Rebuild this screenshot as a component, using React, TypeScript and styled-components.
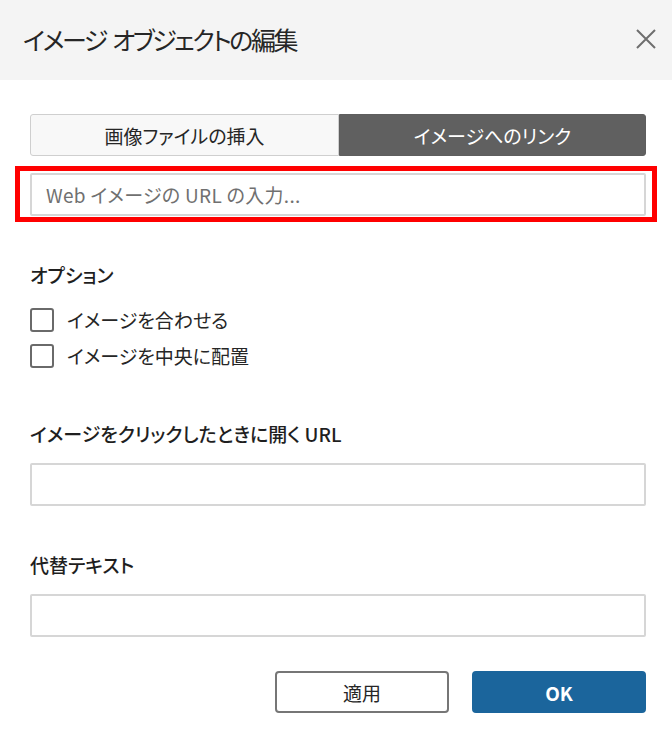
import React from "react";
import styled, { createGlobalStyle } from "styled-components";

const Global = createGlobalStyle`
  html, body { margin: 0; padding: 0; background: #ffffff; }
  body {
    font-family: "Noto Sans CJK JP", "Noto Sans", sans-serif;
    font-feature-settings: "palt";
    color: #262626;
  }
  * { box-sizing: border-box; }
`;

const Dialog = styled.div`
  width: 672px;
  height: 738px;
  background: #ffffff;
  display: flex;
  flex-direction: column;
`;

const Header = styled.header`
  height: 80px;
  background: #f4f4f4;
  display: flex;
  align-items: center;
  justify-content: space-between;
  padding: 0 15px 2px 23px;
`;

const Title = styled.h1`
  margin: 0;
  font-size: 25px;
  font-weight: 400;
  letter-spacing: -2.4px;
  word-spacing: 3px;
  color: #262626;
`;

const CloseButton = styled.button`
  width: 22px;
  height: 22px;
  padding: 0;
  border: none;
  background: transparent;
  display: flex;
  align-items: center;
  justify-content: center;
  cursor: pointer;
`;

const Body = styled.div`
  display: flex;
  flex-direction: column;
  padding: 34px 26px 0 30px;
`;

const Tabs = styled.div`
  display: grid;
  grid-template-columns: 309px 1fr;
  height: 42px;
`;

const Tab = styled.button<{ $active?: boolean }>`
  font-family: inherit;
  font-feature-settings: "palt";
  font-size: 19px;
  border: 1px solid ${(p) => (p.$active ? "#5e5e5e" : "#cfcfcf")};
  background: ${(p) => (p.$active ? "#606060" : "#f8f8f8")};
  color: ${(p) => (p.$active ? "#ffffff" : "#262626")};
  border-radius: ${(p) => (p.$active ? "0 3px 3px 0" : "3px 0 0 3px")};
  padding: 0;
`;

const Highlight = styled.div`
  margin: 10px -11px 0 -15px;
  border: 5px solid #ff0000;
  padding: 2px 6px 1px 10px;
`;

const TextInput = styled.input`
  display: block;
  width: 100%;
  height: 43px;
  border: 2px solid #d6d6d6;
  border-radius: 2px;
  padding: 0 14px;
  font-family: inherit;
  font-feature-settings: "palt";
  font-size: 19px;
  letter-spacing: 0.3px;
  color: #262626;
  background: #fff;
  outline: none;
  &::placeholder { color: #707070; }
`;

const SectionLabel = styled.div<{ $top: number }>`
  margin-top: ${(p) => p.$top}px;
  font-size: 19px;
  font-weight: 500;
  line-height: 26px;
  color: #1f1f1f;
`;

const CheckList = styled.div`
  display: flex;
  flex-direction: column;
  gap: 12px;
  margin-top: 20px;
`;

const CheckRow = styled.label`
  display: flex;
  align-items: center;
  gap: 13px;
  font-size: 19px;
  line-height: 24px;
  color: #262626;
`;

const Box = styled.span`
  width: 24px;
  height: 24px;
  border: 2px solid #6a6a6a;
  border-radius: 3px;
  background: #fff;
  flex: none;
`;

const FieldInput = styled(TextInput)<{ $top: number }>`
  margin-top: ${(p) => p.$top}px;
`;

const Footer = styled.div`
  display: flex;
  justify-content: flex-end;
  gap: 23px;
  margin-top: 34px;
  padding-right: 26px;
`;

const Button = styled.button<{ $primary?: boolean }>`
  width: 174px;
  height: 42px;
  border-radius: 4px;
  font-family: inherit;
  font-size: 19px;
  font-weight: ${(p) => (p.$primary ? 700 : 400)};
  border: 2px solid ${(p) => (p.$primary ? "#1b659c" : "#767676")};
  background: ${(p) => (p.$primary ? "#1b659c" : "#ffffff")};
  color: ${(p) => (p.$primary ? "#ffffff" : "#262626")};
  padding: 0;
`;

export default function App() {
  return (
    <>
      <Global />
      <Dialog>
        <Header>
          <Title>イメージ オブジェクトの編集</Title>
          <CloseButton aria-label="閉じる">
            <svg width="20" height="20" viewBox="0 0 20 20">
              <path d="M1 1 L19 19 M19 1 L1 19" stroke="#6e6e6e" strokeWidth="2" fill="none" />
            </svg>
          </CloseButton>
        </Header>
        <Body>
          <Tabs>
            <Tab>画像ファイルの挿入</Tab>
            <Tab $active>イメージへのリンク</Tab>
          </Tabs>
          <Highlight>
            <TextInput placeholder="Web イメージの URL の入力..." />
          </Highlight>
          <SectionLabel $top={40}>オプション</SectionLabel>
          <CheckList>
            <CheckRow>
              <Box />
              イメージを合わせる
            </CheckRow>
            <CheckRow>
              <Box />
              イメージを中央に配置
            </CheckRow>
          </CheckList>
          <SectionLabel $top={53}>イメージをクリックしたときに開く URL</SectionLabel>
          <FieldInput $top={16} />
          <SectionLabel $top={46}>代替テキスト</SectionLabel>
          <FieldInput $top={16} />
        </Body>
        <Footer>
          <Button>適用</Button>
          <Button $primary>OK</Button>
        </Footer>
      </Dialog>
    </>
  );
}
